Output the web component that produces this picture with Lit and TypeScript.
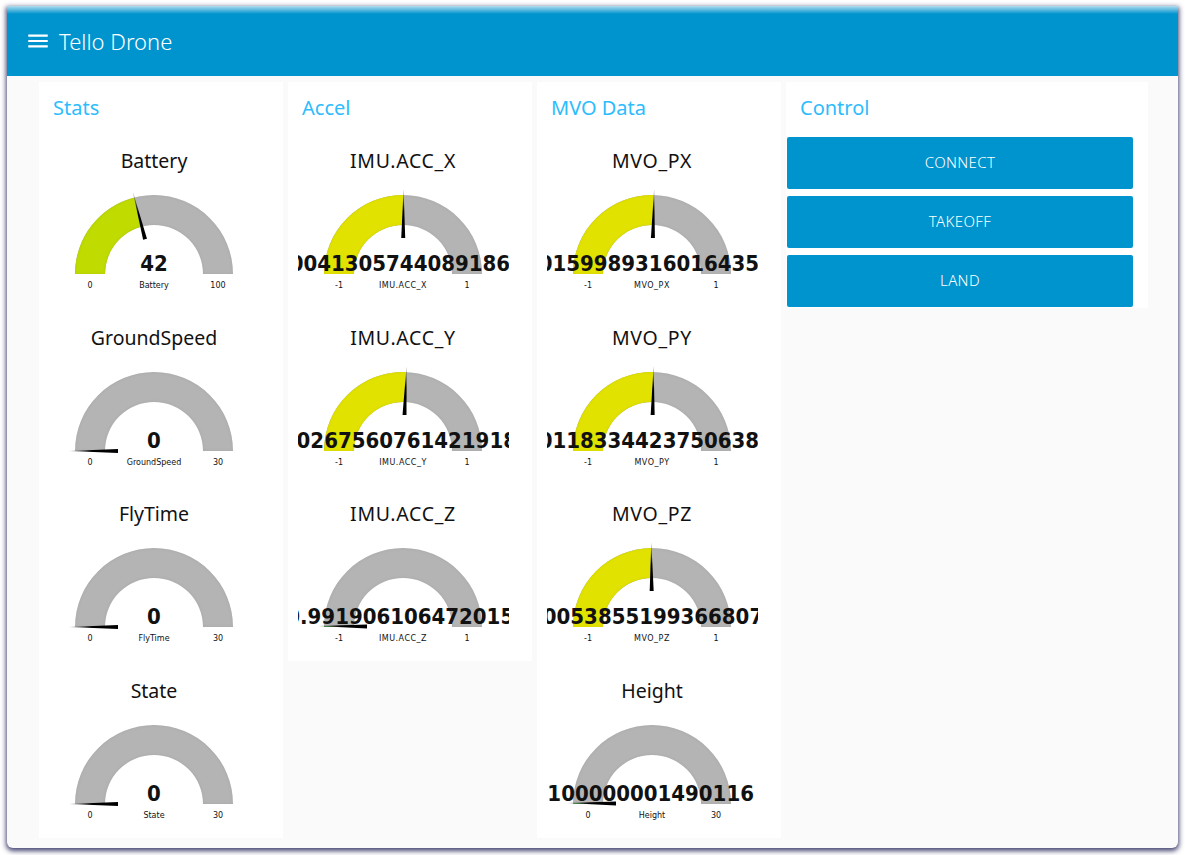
import { LitElement, html, css, svg } from 'lit';
import { customElement, property } from 'lit/decorators.js';

const CX = 105;
const CY = 140;
const OUTER = 79;
const INNER = 49;

// point on the dial: t runs from 0 (left end) to 1 (right end)
function polar(r: number, t: number) {
	const a = Math.PI * (1 - t);
	return `${(CX + r * Math.cos(a)).toFixed(2)} ${(CY - r * Math.sin(a)).toFixed(2)}`;
}

function arc(from: number, to: number) {
	return `M${polar(OUTER, from)} A${OUTER} ${OUTER} 0 0 1 ${polar(OUTER, to)} L${polar(INNER, to)} A${INNER} ${INNER} 0 0 0 ${polar(INNER, from)} Z`;
}

@customElement('tello-gauge')
class TelloGauge extends LitElement {
	static styles = css`
		:host {
			display: block;
			width: 211px;
			height: 170px;
		}
		svg {
			display: block;
			overflow: hidden;
		}
		.title {
			font: 19.5px "Noto Sans", sans-serif;
			fill: #111;
			text-anchor: middle;
		}
		.title.wide {
			letter-spacing: 0.7px;
		}
		.value {
			font: bold 22px "DejaVu Sans Condensed", "DejaVu Sans", sans-serif;
			font-stretch: condensed;
			fill: #111;
			text-anchor: middle;
		}
		.small {
			font: 8px "DejaVu Sans", sans-serif;
			fill: #111;
			text-anchor: middle;
		}
		.small.wide {
			letter-spacing: 0.5px;
		}
		.track {
			fill: #b4b4b4;
		}
	`;

	@property() title = '';
	@property() text = '0';
	@property() sub = '';
	@property({ type: Number }) min = 0;
	@property({ type: Number }) max = 30;
	@property({ type: Number }) val = 0;
	@property({ type: Number }) nudge = 0;
	@property() color = '#e2e200';

	render() {
		const t = (this.val - this.min) / (this.max - this.min);
		const deg = t * 180;
		// the sensor names are all capitals and run wider
		const wide = this.title.includes('_') ? 'wide' : '';
		return html`<svg width="211" height="170" viewBox="0 0 211 170">
			<defs>
				<linearGradient id="needle" gradientUnits="userSpaceOnUse" x1="${CX - 85}" y1="0" x2="${CX - 36}" y2="0">
					<stop offset="0" stop-color="#999"></stop>
					<stop offset="0.45" stop-color="#000"></stop>
					<stop offset="1" stop-color="#000"></stop>
				</linearGradient>
				<filter id="inset" x="-5%" y="-5%" width="110%" height="110%">
					<feComponentTransfer in="SourceAlpha" result="inverse">
						<feFuncA type="table" tableValues="1 0"></feFuncA>
					</feComponentTransfer>
					<feGaussianBlur in="inverse" stdDeviation="1.5" result="blur"></feGaussianBlur>
					<feFlood flood-color="#000" flood-opacity="0.16"></feFlood>
					<feComposite operator="in" in2="blur"></feComposite>
					<feComposite operator="in" in2="SourceAlpha" result="shade"></feComposite>
					<feMerge>
						<feMergeNode in="SourceGraphic"></feMergeNode>
						<feMergeNode in="shade"></feMergeNode>
					</feMerge>
				</filter>
			</defs>
			<text class="title ${wide}" x="${CX}" y="34">${this.title}</text>
			<g filter="url(#inset)">
				<path class="track" d="${arc(0, 1)}"></path>
				${t > 0 ? svg`<path d="${arc(0, t)}" fill="${this.color}"></path>` : ''}
			</g>
			<text class="value" x="${CX + this.nudge}" y="137">${this.text}</text>
			<polygon
				points="${CX - 85},${CY} ${CX - 36},${CY - 2} ${CX - 36},${CY + 2}"
				fill="url(#needle)"
				transform="rotate(${deg} ${CX} ${CY})"
			></polygon>
			<text class="small" x="41" y="154">${this.min}</text>
			<text class="small ${wide}" x="${CX}" y="154">${this.sub}</text>
			<text class="small" x="169" y="154">${this.max}</text>
		</svg>`;
	}
}

type Reading = {
	title: string;
	text: string;
	val: number;
	min: number;
	max: number;
	color: string;
	nudge?: number;
};

const stats: Reading[] = [
	{ title: 'Battery', text: '42', val: 42, min: 0, max: 100, color: '#bfdb00' },
	{ title: 'GroundSpeed', text: '0', val: 0, min: 0, max: 30, color: '#00b500' },
	{ title: 'FlyTime', text: '0', val: 0, min: 0, max: 30, color: '#00b500' },
	{ title: 'State', text: '0', val: 0, min: 0, max: 30, color: '#00b500' },
];
const accel: Reading[] = [
	{ title: 'IMU.ACC_X', text: '0.004130574408918619', val: 0.0041, min: -1, max: 1, color: '#e2e200' },
	{ title: 'IMU.ACC_Y', text: '0.02675607614219189', val: 0.0268, min: -1, max: 1, color: '#e2e200' },
	{ title: 'IMU.ACC_Z', text: '-0.9919061064720154', val: -0.9919, min: -1, max: 1, color: '#2f9e2f' },
];
const mvo: Reading[] = [
	{ title: 'MVO_PX', text: '0.015998931601643561', val: 0.016, min: -1, max: 1, color: '#e2e200' },
	{ title: 'MVO_PY', text: '0.011833442375063891', val: 0.0118, min: -1, max: 1, color: '#e2e200' },
	{ title: 'MVO_PZ', text: '-0.005385519936680794', val: -0.0054, min: -1, max: 1, color: '#e2e200' },
	{ title: 'Height', text: '0.100000001490116', val: 0.1, min: 0, max: 30, color: '#00b500', nudge: -12 },
];

@customElement('app-root')
class AppRoot extends LitElement {
	static styles = css`
		:host {
			display: block;
			height: 855px;
			padding: 6px 7px 7px;
			box-sizing: border-box;
			background: #fff;
		}
		.window {
			height: 100%;
			background: #fafafa;
			border-radius: 0 0 6px 6px;
			box-shadow: 0 2px 5px 1px rgba(50, 50, 100, 0.9);
			overflow: hidden;
		}
		.toolbar {
			height: 70px;
			background: linear-gradient(#b0dcef, #0094ce 8px);
			display: flex;
			align-items: center;
			gap: 8px;
			padding-left: 18px;
			color: #fff;
			font: 300 22px/26px "Noto Sans", sans-serif;
		}
		.menu {
			display: block;
			fill: #fff;
		}
		.board {
			display: grid;
			grid-template-columns: 244px 244px 244px 362px;
			gap: 5px;
			align-items: start;
			padding: 6px 0 0 32px;
		}
		.card {
			background: #fff;
			padding-bottom: 4px;
		}
		.card.control {
			padding-bottom: 1px;
		}
		.card-title {
			height: 52px;
			padding-left: 14px;
			box-sizing: border-box;
			color: #2dbcfd;
			font: 20px/52px "Noto Sans", sans-serif;
		}
		.gauges {
			display: flex;
			flex-direction: column;
			gap: 6.67px;
			padding-left: 10px;
		}
		.buttons {
			display: flex;
			flex-direction: column;
			gap: 7px;
			padding: 3px 15px 0 1px;
		}
		button {
			height: 52px;
			border: none;
			border-radius: 2px;
			padding: 0 0 2px;
			background: #0094ce;
			color: #fff;
			font: 300 15px "Noto Sans", sans-serif;
			letter-spacing: 0.35px;
		}
	`;

	gauges(list: Reading[]) {
		return html`<div class="gauges">
			${list.map(
				(g) => html`<tello-gauge
					.title=${g.title}
					.text=${g.text}
					.sub=${g.title}
					.val=${g.val}
					.min=${g.min}
					.max=${g.max}
					.nudge=${g.nudge ?? 0}
					.color=${g.color}
				></tello-gauge>`
			)}
		</div>`;
	}

	render() {
		return html`<div class="window">
			<div class="toolbar">
				<svg class="menu" width="26" height="26" viewBox="0 0 24 24">
					<path d="M3 18h18v-2H3v2zm0-5h18v-2H3v2zm0-7v2h18V6H3z"></path>
				</svg>
				<span>Tello Drone</span>
			</div>
			<div class="board">
				<div class="card"><div class="card-title">Stats</div>${this.gauges(stats)}</div>
				<div class="card"><div class="card-title">Accel</div>${this.gauges(accel)}</div>
				<div class="card"><div class="card-title">MVO Data</div>${this.gauges(mvo)}</div>
				<div class="card control">
					<div class="card-title">Control</div>
					<div class="buttons">
						<button>CONNECT</button>
						<button>TAKEOFF</button>
						<button>LAND</button>
					</div>
				</div>
			</div>
		</div>`;
	}
}
